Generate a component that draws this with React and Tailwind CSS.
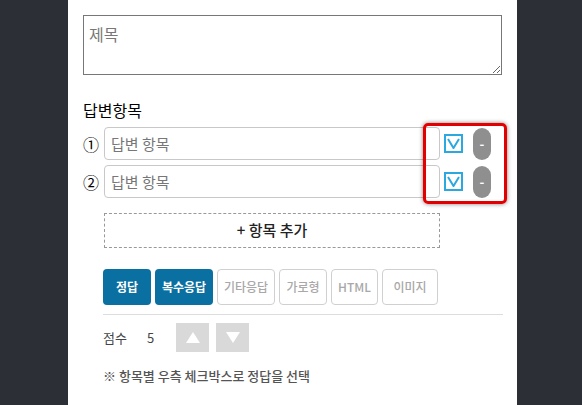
import React from 'react';

const kr = { fontFamily: '"Noto Sans CJK KR", "Noto Sans", sans-serif' };

function CheckBox() {
  return (
    <div className="w-[19px] h-[19px] border-2 border-[#2ba8df] flex items-center justify-center">
      <svg width="13" height="11" viewBox="0 0 13 11" fill="none">
        <path d="M1 1 L6.5 10 L12 1" stroke="#2ba8df" strokeWidth="2" />
      </svg>
    </div>
  );
}

function AnswerRow({ num }) {
  return (
    <div className="flex items-center">
      <span className="w-[21px] text-[16px] text-black leading-none">{num}</span>
      <input
        className="w-[336px] h-[33px] border border-[#c8c8c8] rounded-[4px] px-[6px] text-[15px] placeholder:text-[#777] outline-none"
        style={kr}
        placeholder="답변 항목"
      />
      <div className="ml-[4px]"><CheckBox /></div>
      <div className="ml-[10px] w-[18px] h-[32px] rounded-full bg-[#8f8f8f] flex items-center justify-center text-white text-[13px] font-bold">-</div>
    </div>
  );
}

const types = [
  { label: '정답', on: true, w: 'w-[48px]' },
  { label: '복수응답', on: true, w: 'w-[58px]' },
  { label: '기타응답', on: false, w: 'w-[58px]' },
  { label: '가로형', on: false, w: 'w-[48px]' },
  { label: 'HTML', on: false, w: 'w-[47px]' },
  { label: '이미지', on: false, w: 'w-[56px]' },
];

export default function App() {
  return (
    <div className="w-[582px] h-[405px] bg-[#2c2f36] flex pl-[68px] overflow-hidden" style={kr}>
      <div className="w-[449px] bg-white pt-[15px] px-[15px] relative">
        {/* 제목 */}
        <textarea
          className="block w-[419px] h-[60px] border border-[#777] px-[5px] py-[6px] text-[16px] placeholder:text-[#777] resize-y outline-none"
          style={kr}
          placeholder="제목"
        />

        <div className="mt-[24px] text-[16px] text-black leading-[22px]">답변항목</div>

        <div className="mt-[6px] flex flex-col gap-[5px]">
          <AnswerRow num="①" />
          <AnswerRow num="②" />
        </div>

        {/* 강조 표시 */}
        <div className="absolute left-[355px] top-[123px] w-[84px] h-[81px] border-[3px] border-[#e40000] rounded-[5px] shadow-[0_0_4px_rgba(0,0,0,0.5)]" />

        <div className="ml-[21px] mt-[15px] w-[336px] h-[35px] border border-dashed border-[#999] flex items-center justify-center text-[15px] text-[#222] font-medium">
          + 항목 추가
        </div>

        <div className="ml-[20px] mt-[21px] flex gap-[4px]">
          {types.map((t) => (
            <div
              key={t.label}
              className={
                t.on
                  ? `${t.w} h-[36px] rounded-[4px] bg-[#0a6fa1] text-white text-[12px] font-bold flex items-center justify-center`
                  : `${t.w} h-[36px] rounded-[4px] border border-[#d0d0d0] text-[#a8a8a8] text-[12px] font-medium flex items-center justify-center`
              }
            >
              {t.label}
            </div>
          ))}
        </div>

        <div className="ml-[20px] mt-[9px] w-[400px] border-t border-[#ddd]" />

        <div className="ml-[20px] mt-[8px] flex items-center">
          <span className="text-[13px] text-[#444] w-[44px]">점수</span>
          <span className="text-[13px] text-[#444] w-[29px]">5</span>
          <div className="w-[33px] h-[29px] bg-[#d9d9d9] flex items-center justify-center">
            <svg width="14" height="11" viewBox="0 0 14 11"><path d="M7 0 L14 11 L0 11 Z" fill="#fff" /></svg>
          </div>
          <div className="ml-[7px] w-[33px] h-[29px] bg-[#d9d9d9] flex items-center justify-center">
            <svg width="14" height="11" viewBox="0 0 14 11"><path d="M0 0 L14 0 L7 11 Z" fill="#fff" /></svg>
          </div>
        </div>

        <div className="ml-[20px] mt-[14px] text-[13px] text-[#555] font-medium">※ 항목별 우측 체크박스로 정답을 선택</div>
      </div>
    </div>
  );
}
